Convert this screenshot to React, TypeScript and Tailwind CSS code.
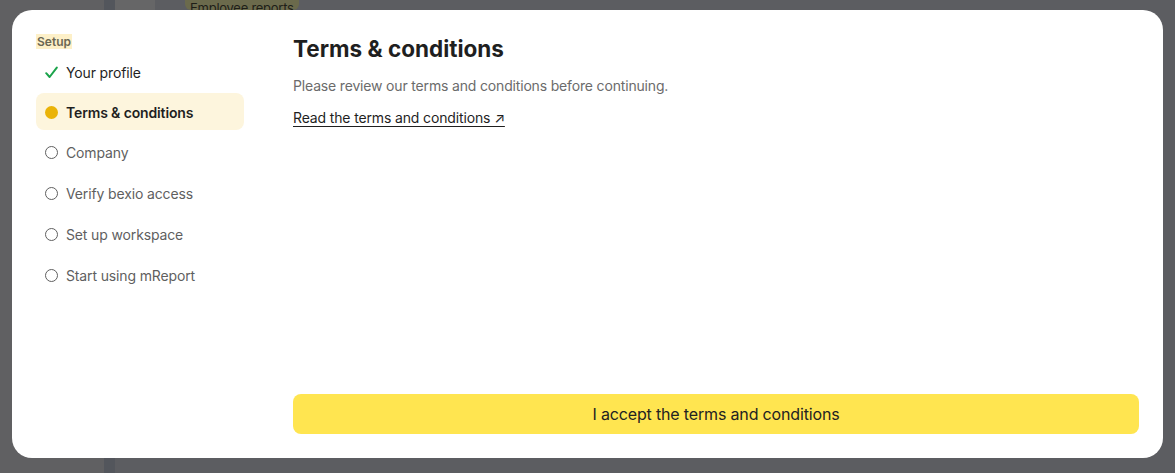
const steps = [
  { label: 'Your profile', state: 'done' },
  { label: 'Terms & conditions', state: 'active' },
  { label: 'Company', state: 'todo' },
  { label: 'Verify bexio access', state: 'todo' },
  { label: 'Set up workspace', state: 'todo' },
  { label: 'Start using mReport', state: 'todo' },
]

function StepIcon({ state }: { state: string }) {
  if (state === 'done') {
    return (
      <svg width="13" height="13" viewBox="0 0 13 13" fill="none" className="text-[#1ba34b]">
        <path d="M1.2 7.2 4.6 11 11.8 1.6" stroke="currentColor" strokeWidth="2" strokeLinecap="round" strokeLinejoin="round" />
      </svg>
    )
  }
  if (state === 'active') {
    return <span className="block w-[13px] h-[13px] rounded-full bg-[#eab308]" />
  }
  return <span className="block w-[13px] h-[13px] rounded-full border-[1.5px] border-[#5f5f5f]" />
}

export default function App() {
  return (
    <div className="relative w-[1175px] h-[473px] overflow-hidden bg-[#5c5d61]" style={{ fontFamily: 'Inter, "Noto Sans", sans-serif' }}>
      {/* Page behind the overlay */}
      <div className="flex h-full">
        <div className="w-[104px] h-full bg-[#606062]" />
        <div className="w-[11px] h-full bg-[#53565c]" />
        <div className="w-[40px] h-full">
          <div className="h-[10px] bg-[#666667]" />
        </div>
        <div className="flex-1 h-full">
          <div className="pl-[30px] flex">
            <span className="px-[5px] rounded-b-md bg-[#6b6a4c] text-[13px] tracking-[-0.02em] leading-[10px] h-[10px] overflow-hidden text-[#1e1e18] flex items-end">
              <span className="translate-y-[3px]">Employee reports</span>
            </span>
          </div>
        </div>
      </div>

      {/* Modal */}
      <div className="absolute left-[12px] top-[10px] w-[1151px] h-[448px] bg-white rounded-[20px] p-6 flex gap-[49px]">
        <aside className="w-[208px] shrink-0">
          <div className="flex">
            <span className="bg-[#fdf0c8] text-[#6b6753] text-[12px] font-semibold leading-[15px] px-[1px]">Setup</span>
          </div>
          <ul className="mt-[3px] flex flex-col gap-1">
            {steps.map((s) => (
              <li
                key={s.label}
                className={
                  s.state === 'active'
                    ? 'flex items-center gap-[8px] h-[37px] px-2 pt-[2px] rounded-lg bg-[#fdf5dd] text-[#1f1f1f] text-[14px] tracking-[-0.01em] font-semibold'
                    : s.state === 'done'
                    ? 'flex items-center gap-[8px] h-[37px] px-2 pt-[4px] rounded-lg text-[#1f1f1f] text-[14px] tracking-[-0.01em]'
                    : 'flex items-center gap-[8px] h-[37px] px-2 rounded-lg text-[#5f5f5f] text-[14px] tracking-[-0.01em]'
                }
              >
                <span className="w-[14px] flex justify-center">
                  <StepIcon state={s.state} />
                </span>
                <span>{s.label}</span>
              </li>
            ))}
          </ul>
        </aside>

        <main className="flex-1 flex flex-col">
          <h1 className="text-[22.5px] font-bold text-[#1f1f1f] leading-[28px] mt-[1px]">Terms &amp; conditions</h1>
          <p className="mt-[13px] text-[14px] tracking-[-0.012em] text-[#6b6b6b] leading-5">Please review our terms and conditions before continuing.</p>
          <div className="mt-[9px]">
            <a href="#" className="text-[14px] tracking-[-0.01em] text-[#1f1f1f] leading-5 underline underline-offset-[3px]">
              Read the terms and conditions ↗
            </a>
          </div>
          <div className="flex-1" />
          <button className="h-[40px] w-full rounded-lg bg-[#ffe550] text-[16px] tracking-[-0.01em] text-[#222222]">
            I accept the terms and conditions
          </button>
        </main>
      </div>
    </div>
  )
}
